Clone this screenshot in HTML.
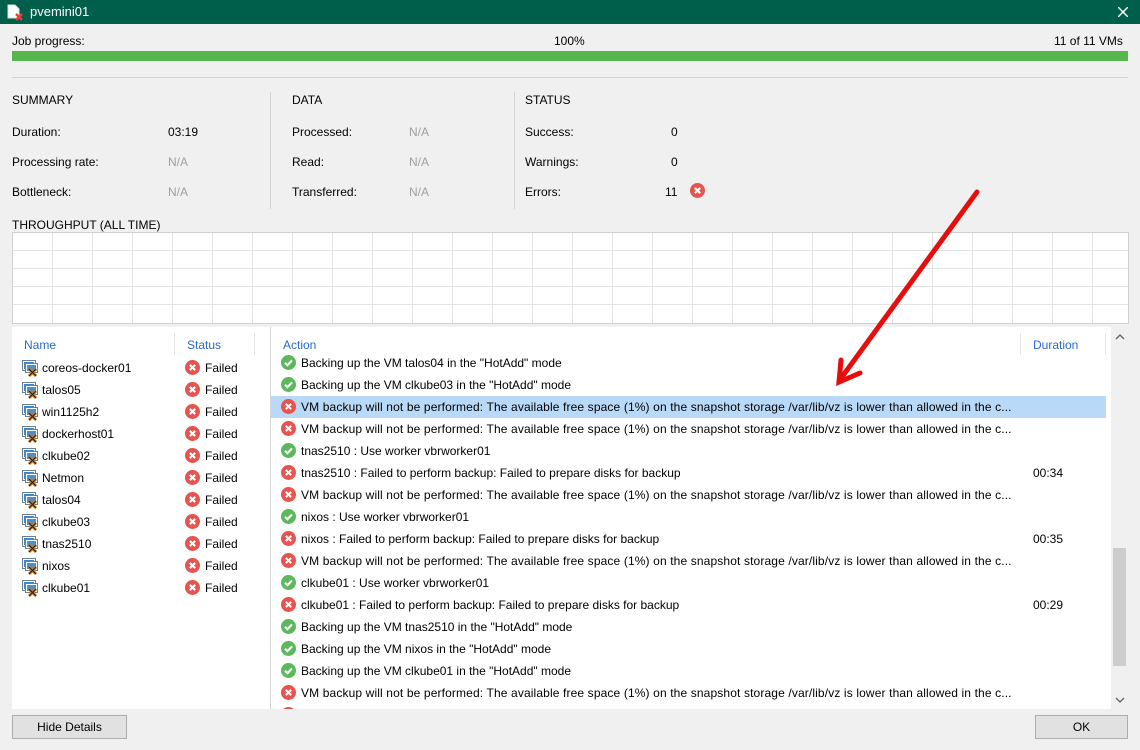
<!DOCTYPE html>
<html><head><meta charset="utf-8"><style>
*{margin:0;padding:0;box-sizing:border-box}
body{width:1140px;height:750px;background:#f0f0f0;font-family:"Liberation Sans",sans-serif;font-size:12px;color:#000;position:relative;overflow:hidden}
.a{position:absolute;white-space:nowrap}
.g{color:#a0a0a0}
.t{height:24px;background:#005f4b;color:#fff;position:absolute;left:0;top:0;width:1140px}
.ic{position:absolute;width:15px;height:15px}
.row{position:absolute;left:0;height:22px;line-height:22px}
.btn{position:absolute;border:1px solid #adadad;background:#e1e1e1;text-align:center;line-height:22px;height:24px}
</style></head><body>
<div class="t">
<svg class="a" style="left:6px;top:4px" width="18" height="18" viewBox="0 0 18 18"><path d="M2 1h7l4 4v9H2z" fill="#fff" stroke="#ddd"/><path d="M10 10l6 6M16 10l-6 6" stroke="#e8403a" stroke-width="2.5"/></svg>
<div class="a" style="left:30px;top:4px;font-size:13px">pvemini01</div>
<svg class="a" style="left:1118px;top:7px" width="10" height="10"><path d="M0 0L10 10M10 0L0 10" stroke="#fff" stroke-width="1.5"/></svg>
</div>
<div class="a" style="left:12px;top:34px">Job progress:</div>
<div class="a" style="left:554px;top:34px">100%</div>
<div class="a" style="left:1054px;top:34px">11 of 11 VMs</div>
<div class="a" style="left:12px;top:51px;width:1116px;height:10px;background:#56b84c"></div>
<div class="a" style="left:12px;top:77px;width:1116px;height:1px;background:#d4d4d4"></div>

<div class="a" style="left:12px;top:93px">SUMMARY</div>
<div class="a" style="left:12px;top:125px">Duration:</div><div class="a" style="left:168px;top:125px">03:19</div>
<div class="a" style="left:12px;top:155px">Processing rate:</div><div class="a g" style="left:168px;top:155px">N/A</div>
<div class="a" style="left:12px;top:185px">Bottleneck:</div><div class="a g" style="left:168px;top:185px">N/A</div>
<div class="a" style="left:270px;top:92px;width:1px;height:117px;background:#d4d4d4"></div>
<div class="a" style="left:292px;top:93px">DATA</div>
<div class="a" style="left:292px;top:125px">Processed:</div><div class="a g" style="left:409px;top:125px">N/A</div>
<div class="a" style="left:292px;top:155px">Read:</div><div class="a g" style="left:409px;top:155px">N/A</div>
<div class="a" style="left:292px;top:185px">Transferred:</div><div class="a g" style="left:409px;top:185px">N/A</div>
<div class="a" style="left:514px;top:92px;width:1px;height:117px;background:#d4d4d4"></div>
<div class="a" style="left:525px;top:93px">STATUS</div>
<div class="a" style="left:525px;top:125px">Success:</div><div class="a" style="left:671px;top:125px">0</div>
<div class="a" style="left:525px;top:155px">Warnings:</div><div class="a" style="left:671px;top:155px">0</div>
<div class="a" style="left:525px;top:185px">Errors:</div><div class="a" style="left:665px;top:185px">11</div>
<svg class="ic" style="left:690px;top:183px" viewBox="0 0 14 14"><circle cx="7" cy="7" r="7" fill="#e8534f"/><path d="M4.5 4.5l5 5M9.5 4.5l-5 5" stroke="#fff" stroke-width="2"/></svg>

<div class="a" style="left:12px;top:218px">THROUGHPUT (ALL TIME)</div>
<svg class="a" style="left:12px;top:232px" width="1117" height="92">
<rect x="0.5" y="0.5" width="1116" height="91" fill="#fff" stroke="#d0d0d0"/>
<g stroke="#e3e3e3">
<path d="M1 18.5H1116M1 36.5H1116M1 54.5H1116M1 72.5H1116"/>
<path d="M40.5 1V91M80.5 1V91M120.5 1V91M160.5 1V91M200.5 1V91M240.5 1V91M280.5 1V91M320.5 1V91M360.5 1V91M400.5 1V91M440.5 1V91M480.5 1V91M520.5 1V91M560.5 1V91M600.5 1V91M640.5 1V91M680.5 1V91M720.5 1V91M760.5 1V91M800.5 1V91M840.5 1V91M880.5 1V91M920.5 1V91M960.5 1V91M1000.5 1V91M1040.5 1V91M1080.5 1V91"/>
</g></svg>

<div class="a" style="left:12px;top:327px;width:258px;height:382px;background:#fff"></div>
<div class="a" style="left:270px;top:327px;width:1px;height:382px;background:#d4d4d4"></div>
<div class="a" style="left:271px;top:327px;width:840px;height:382px;background:#fff;overflow:hidden" id="r"></div>
<div class="a" style="left:1111px;top:327px;width:17px;height:382px;background:#f0f0f0"></div>
<div class="a" style="left:1113px;top:548px;width:13px;height:118px;background:#cdcdcd"></div>
<svg class="a" style="left:1115px;top:333px" width="10" height="8"><path d="M1 6l4-4 4 4" stroke="#606060" fill="none" stroke-width="1.3"/></svg>
<svg class="a" style="left:1115px;top:696px" width="10" height="8"><path d="M1 2l4 4 4-4" stroke="#606060" fill="none" stroke-width="1.3"/></svg>

<div class="a" style="left:24px;top:338px;color:#2a6bc9">Name</div>
<div class="a" style="left:174px;top:333px;width:1px;height:22px;background:#e5e5e5"></div>
<div class="a" style="left:187px;top:338px;color:#2a6bc9">Status</div>
<div class="a" style="left:254px;top:333px;width:1px;height:22px;background:#e5e5e5"></div>
<div class="a" style="left:283px;top:338px;color:#2a6bc9">Action</div>
<div class="a" style="left:1020px;top:333px;width:1px;height:22px;background:#e5e5e5"></div>
<div class="a" style="left:1033px;top:338px;color:#2a6bc9">Duration</div>
<div class="a" style="left:1105px;top:333px;width:1px;height:22px;background:#e5e5e5"></div>

<div id="left"></div>
<div id="right"></div>

<div class="btn" style="left:12px;top:715px;width:115px">Hide Details</div>
<div class="btn" style="left:1035px;top:715px;width:93px">OK</div>

<svg class="a" style="left:0;top:0" width="1140" height="750"><g stroke="#e60d0d" stroke-width="5" stroke-linecap="round" fill="none"><path d="M977 192L839 381"/><path d="M841 360L839 382L860 373"/></g></svg>

<script>
var ok='<svg class="ic" style="left:281px;top:3px" viewBox="0 0 14 14"><circle cx="7" cy="7" r="7" fill="#5cb85c"/><path d="M3.7 7.2l2.3 2.3 4.3-4.5" stroke="#fff" stroke-width="2" fill="none"/></svg>';
var er='<svg class="ic" style="left:281px;top:3px" viewBox="0 0 14 14"><circle cx="7" cy="7" r="7" fill="#e8534f"/><path d="M4.5 4.5l5 5M9.5 4.5l-5 5" stroke="#fff" stroke-width="2"/></svg>';
var VM='VM backup will not be performed: The available free space (1%) on the snapshot storage /var/lib/vz is lower than allowed in the c...';
var R=[[1,'Backing up the VM talos04 in the "HotAdd" mode'],[1,'Backing up the VM clkube03 in the "HotAdd" mode'],[0,VM,'',1],[0,VM],[1,'tnas2510 : Use worker vbrworker01'],[0,'tnas2510 : Failed to perform backup: Failed to prepare disks for backup','00:34'],[0,VM],[1,'nixos : Use worker vbrworker01'],[0,'nixos : Failed to perform backup: Failed to prepare disks for backup','00:35'],[0,VM],[1,'clkube01 : Use worker vbrworker01'],[0,'clkube01 : Failed to perform backup: Failed to prepare disks for backup','00:29'],[1,'Backing up the VM tnas2510 in the "HotAdd" mode'],[1,'Backing up the VM nixos in the "HotAdd" mode'],[1,'Backing up the VM clkube01 in the "HotAdd" mode'],[0,VM],[0,'']];
var h='';
R.forEach(function(r,i){var top=352+i*22;var bg=r[3]?'background:#b9d9f8;left:271px;width:835px;':'left:271px;width:835px;';
var clip=top+22>709?'height:'+(709-top)+'px;overflow:hidden;':'';
var ls=r[1]===VM?'letter-spacing:0.13px;':'';
h+='<div class="row" style="'+bg+'top:'+top+'px;'+clip+'"><div style="position:absolute;left:-271px;top:0;width:1140px;height:22px">'+(r[0]?ok:er)+'<div class="a" style="left:301px;top:0;'+ls+'">'+r[1]+'</div>'+(r[2]?'<div class="a" style="left:1033px;top:0">'+r[2]+'</div>':'')+'</div></div>';});
document.getElementById('right').innerHTML=h;
var N=['coreos-docker01','talos05','win1125h2','dockerhost01','clkube02','Netmon','talos04','clkube03','tnas2510','nixos','clkube01'];
var vm='<svg class="a" style="left:22px;top:3px" width="18" height="17" viewBox="0 0 18 17"><rect x="0.5" y="0.5" width="13" height="10" fill="#fff" stroke="#6b7f94"/><rect x="2" y="2" width="10" height="7" fill="#3d87c8"/><rect x="3.5" y="3.5" width="12" height="9" fill="#fff" stroke="#6b7f94"/><rect x="5" y="5" width="9" height="6" fill="#4a90d0"/><path d="M7 9l7 7M14 9l-7 7" stroke="#e67e17" stroke-width="3"/><path d="M7 9l7 7M14 9l-7 7" stroke="#222" stroke-width="1.2"/></svg>';
var l='';
N.forEach(function(n,i){var top=357+i*22;l+='<div class="row" style="top:'+top+'px;width:270px">'+vm+'<div class="a" style="left:42px">'+n+'</div>'+er.replace('left:281px','left:185px')+'<div class="a" style="left:205px">Failed</div></div>';});
document.getElementById('left').innerHTML=l;
</script>
</body></html>
